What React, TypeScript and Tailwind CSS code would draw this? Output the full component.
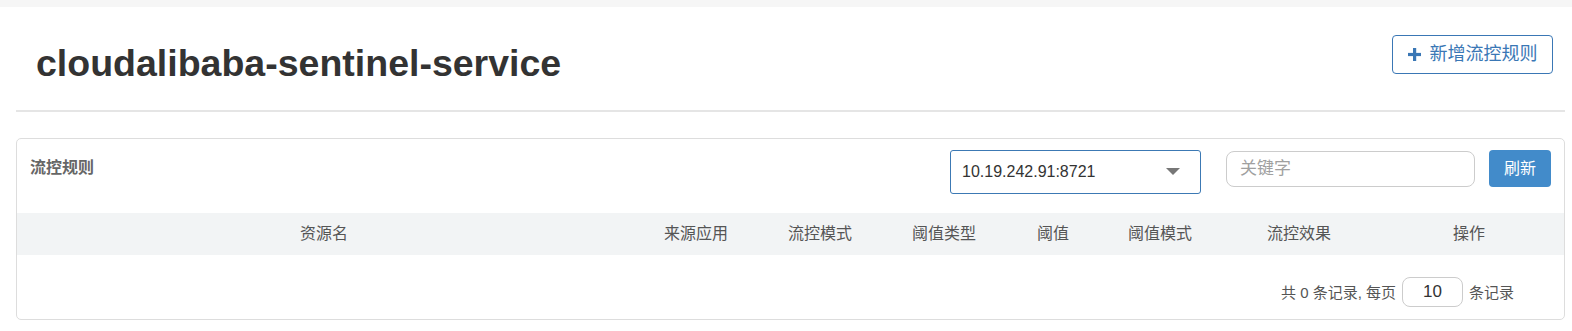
import React from "react";

const font = { fontFamily: '"Liberation Sans", Arial, "Noto Sans CJK SC", sans-serif' };

const cols: { label: string; w: number }[] = [
  { label: "资源名", w: 614 },
  { label: "来源应用", w: 130 },
  { label: "流控模式", w: 118 },
  { label: "阈值类型", w: 130 },
  { label: "阈值", w: 88 },
  { label: "阈值模式", w: 126 },
  { label: "流控效果", w: 152 },
  { label: "操作", w: 188 },
];

export default function App() {
  return (
    <div className="w-[1572px] h-[331px] bg-white overflow-hidden" style={font}>
      <div className="h-[7px] bg-[#f6f6f6]" />
      <div className="px-4">
        <div className="flex items-start justify-between h-[105px] border-b-2 border-[#e5e5e5] mr-[-9px]">
          <h1 className="pl-5 pt-[36px] text-[37.5px] leading-[40px] font-bold text-[#333]">
            cloudalibaba-sentinel-service
          </h1>
          <button className="mt-[28px] mr-[12px] h-[39px] w-[161px] flex items-center justify-center gap-[9px] rounded-[4px] border border-[#3a77b5] text-[#3a77b5] text-[18px]">
            <svg width="13" height="13" viewBox="0 0 13 13" className="fill-[#3a77b5]">
              <rect x="5" y="0" width="3.2" height="13" />
              <rect x="0" y="4.9" width="13" height="3.2" />
            </svg>
            <span>新增流控规则</span>
          </button>
        </div>
        <div className="mt-[26px] h-[182px] mr-[-9px] rounded-[5px] border border-[#dddddd] flex flex-col">
          <div className="flex items-start h-[74px]">
            <div className="pl-[13px] pt-[17px] text-[16px] font-bold text-[#666] flex-1">流控规则</div>
            <div className="mt-[11px] w-[251px] h-[44px] rounded-[3px] border border-[#3c79b4] flex items-center justify-between pl-[11px] pr-[20px] text-[16px] text-[#333]">
              <span>10.19.242.91:8721</span>
              <svg width="14" height="8" viewBox="0 0 14 8"><path d="M0 0 L14 0 L7 7 Z" fill="#777" /></svg>
            </div>
            <div className="ml-[25px] mt-[12px] w-[249px] h-[36px] rounded-[8px] border border-[#cccccc] flex items-center pl-[13px] text-[17px] text-[#a0a0a0]">
              关键字
            </div>
            <button className="ml-[14px] mr-[13px] mt-[11px] w-[62px] h-[37px] rounded-[4px] bg-[#428bca] text-white text-[16px]">
              刷新
            </button>
          </div>
          <div className="flex h-[42px] bg-[#f2f4f5] text-[16px] text-[#555] items-center">
            {cols.map((c) => (
              <div key={c.label} className="text-center shrink-0" style={{ width: c.w }}>
                {c.label}
              </div>
            ))}
          </div>
          <div className="flex-1 flex items-start justify-end pt-[22px] pr-[50px] text-[15px] text-[#555]">
            <span className="mt-[5px]">共 0 条记录, 每页</span>
            <div className="mx-[6px] w-[61px] h-[30px] rounded-[8px] border border-[#cccccc] flex items-center justify-center text-[17px] text-[#333]">
              10
            </div>
            <span className="mt-[5px]">条记录</span>
          </div>
        </div>
      </div>
    </div>
  );
}
